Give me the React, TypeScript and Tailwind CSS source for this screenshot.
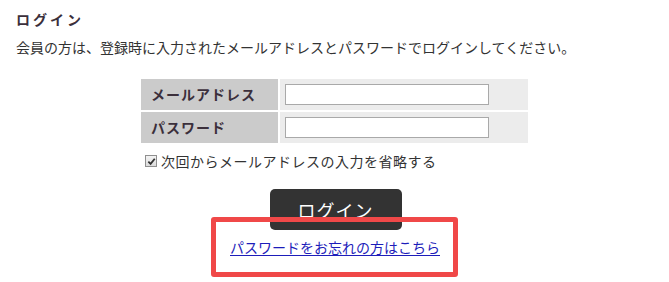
export default function App() {
  const jp = "font-['Noto_Sans_CJK_JP','Noto_Sans',sans-serif]";

  return (
    <div className={`w-[669px] h-[282px] bg-white text-[#333] overflow-hidden ${jp}`}>
      {/* HEADER */}
      <div className="pl-[16px] pt-[9px]">
        <h2 className="text-[14px] leading-[20px] font-bold tracking-[3px] text-[#3b2f3b]">ログイン</h2>
        <p className="mt-[8px] text-[14px] leading-[20px]">
          会員の方は、登録時に入力されたメールアドレスとパスワードでログインしてください。
        </p>
      </div>

      {/* FORM */}
      <div className="mx-auto mt-[22px] w-[387px]">
        <div className="grid grid-cols-[137px_248px] gap-[2px]">
          <div className="h-[31px] bg-[#cbcbcb] pl-[10px] flex items-center text-[14px] font-bold tracking-[1px] text-[#3b2f3b]">
            メールアドレス
          </div>
          <div className="h-[31px] bg-[#ececec] pl-[5px] flex items-center">
            <input type="text" className="w-[204px] h-[21px] bg-white border border-[#a9a9a9] outline-none" />
          </div>
          <div className="h-[31px] bg-[#cbcbcb] pl-[10px] flex items-center text-[14px] font-bold tracking-[1px] text-[#3b2f3b]">
            パスワード
          </div>
          <div className="h-[31px] bg-[#ececec] pl-[5px] flex items-center">
            <input type="password" className="w-[204px] h-[21px] bg-white border border-[#a9a9a9] outline-none" />
          </div>
        </div>

        <label className="mt-[8px] flex items-center h-[20px] pl-[4px] text-[14px] tracking-[0.5px]">
          <span className="w-[12px] h-[12px] border border-[#8f8f8f] bg-gradient-to-b from-[#f4f4f4] to-[#dcdcdc] flex items-center justify-center mr-[4px]">
            <svg viewBox="0 0 10 10" className="w-[9px] h-[9px]">
              <path d="M1.5 5.2 L4 7.6 L8.6 2" fill="none" stroke="#333" strokeWidth="2" />
            </svg>
          </span>
          次回からメールアドレスの入力を省略する
        </label>
      </div>

      {/* BOUTON */}
      <div className="mt-[18px] flex justify-center">
        <button className="w-[132px] h-[41px] rounded-[5px] bg-[#333333] text-white text-[18px] leading-none tracking-[1px] ml-[2px]">
          ログイン
        </button>
      </div>

      {/* LIEN + CADRE ROUGE */}
      <div className="relative mx-auto -mt-[13px] w-[247px] h-[60px] flex items-center justify-center pl-[1px]">
        <a href="#" className="text-[14px] leading-[20px] text-[#1d1dba] underline underline-offset-2">
          パスワードをお忘れの方はこちら
        </a>
        <div className="absolute inset-0 border-[5px] border-[#f04848] rounded-[3px] pointer-events-none"></div>
      </div>
    </div>
  );
}
